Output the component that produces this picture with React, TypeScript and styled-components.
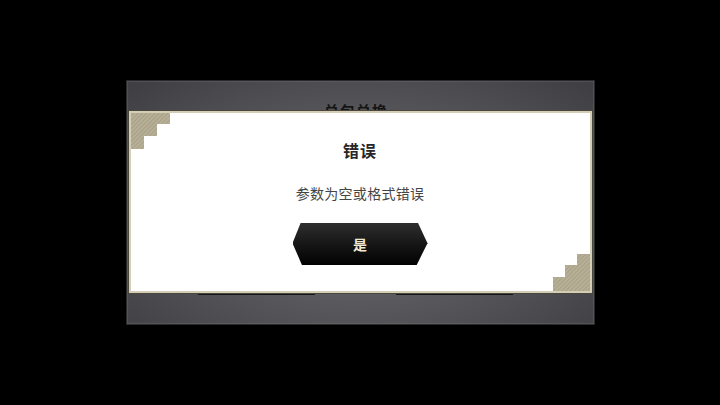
import * as React from 'react';
import styled, { createGlobalStyle } from 'styled-components';

const GlobalStyle = createGlobalStyle`
    html, body {
        margin: 0;
        padding: 0;
        background: #000;
    }
    body {
        font-family: "Noto Sans CJK SC", "Noto Sans", sans-serif;
    }
`;

const Stage = styled.div`
    width: 720px;
    height: 405px;
    display: flex;
    align-items: flex-start;
    justify-content: center;
    padding-top: 80px;
    box-sizing: border-box;
    background: #000;
`;

const Panel = styled.div`
    position: relative;
    box-sizing: border-box;
    width: 469px;
    height: 245px;
    border: 1px solid #2a2a2c;
    background: radial-gradient(
        ellipse at 50% 55%,
        #707074 0%,
        #5a5a5e 45%,
        #3e3e42 100%
    );
    box-shadow: inset 0 0 1px 1px rgba(120, 120, 124, 0.35);
    display: flex;
    flex-direction: column;
    align-items: center;
    justify-content: space-between;
    padding: 19px 0 29px;
`;

const PanelTitle = styled.div`
    font-size: 15px;
    font-weight: 700;
    letter-spacing: 1px;
    color: #141414;
    margin-left: -8px;
`;

const PanelButtons = styled.div`
    display: flex;
    gap: 81px;
    margin-left: -9px;
`;

const PanelButton = styled.div`
    width: 117px;
    height: 40px;
    background: #161616;
`;

const Dialog = styled.div`
    position: absolute;
    left: 2px;
    top: 30px;
    box-sizing: border-box;
    width: 463px;
    height: 182px;
    border: 2px solid #d5ceb6;
    outline: 1px solid #4a473e;
    background: #fff;
    display: flex;
    flex-direction: column;
    align-items: center;
    padding-top: 27px;
`;

const DialogTitle = styled.div`
    font-size: 16px;
    line-height: 20px;
    font-weight: 700;
    color: #262626;
    letter-spacing: 1px;
`;

const DialogMessage = styled.div`
    margin-top: 23px;
    font-size: 14px;
    line-height: 20px;
    color: #444;
    letter-spacing: 0.3px;
`;

const ConfirmButton = styled.button`
    margin-top: 20px;
    width: 135px;
    height: 42px;
    border: none;
    padding: 0;
    cursor: pointer;
    clip-path: polygon(6% 0, 93% 0, 100% 48%, 92% 100%, 7% 100%, 0 48%);
    background: linear-gradient(#2e2e2e 0%, #141414 55%, #020202 100%);
    color: #f1e9d2;
    font-family: "Noto Sans CJK SC", sans-serif;
    font-size: 14px;
    font-weight: 700;
`;

const Corner = styled.svg<{ $place: 'tl' | 'br' }>`
    position: absolute;
    ${(p) => (p.$place === 'tl' ? 'left: 0; top: 0;' : 'right: 0; bottom: 0;')}
`;

const Hatch = ({ id }: { id: string }) => (
    <defs>
        <pattern
            id={id}
            width="3"
            height="3"
            patternUnits="userSpaceOnUse"
            patternTransform="rotate(45)"
        >
            <rect width="3" height="3" fill="#a9a289" />
            <rect width="1.4" height="3" fill="#bcb59c" />
        </pattern>
    </defs>
);

const App = () => (
    <Stage>
        <GlobalStyle />
        <Panel>
            <PanelTitle>兑包兑换</PanelTitle>
            <PanelButtons>
                <PanelButton />
                <PanelButton />
            </PanelButtons>
            <Dialog>
                <Corner $place="tl" width="39" height="36" viewBox="0 0 39 36">
                    <Hatch id="hatchTl" />
                    <path d="M0 0H39V11H26V23H13V36H0Z" fill="url(#hatchTl)" />
                </Corner>
                <Corner $place="br" width="37" height="37" viewBox="0 0 37 37">
                    <Hatch id="hatchBr" />
                    <path d="M24 0H37V37H0V23H12V11H24Z" fill="url(#hatchBr)" />
                </Corner>
                <DialogTitle>错误</DialogTitle>
                <DialogMessage>参数为空或格式错误</DialogMessage>
                <ConfirmButton>是</ConfirmButton>
            </Dialog>
        </Panel>
    </Stage>
);

export default App;
